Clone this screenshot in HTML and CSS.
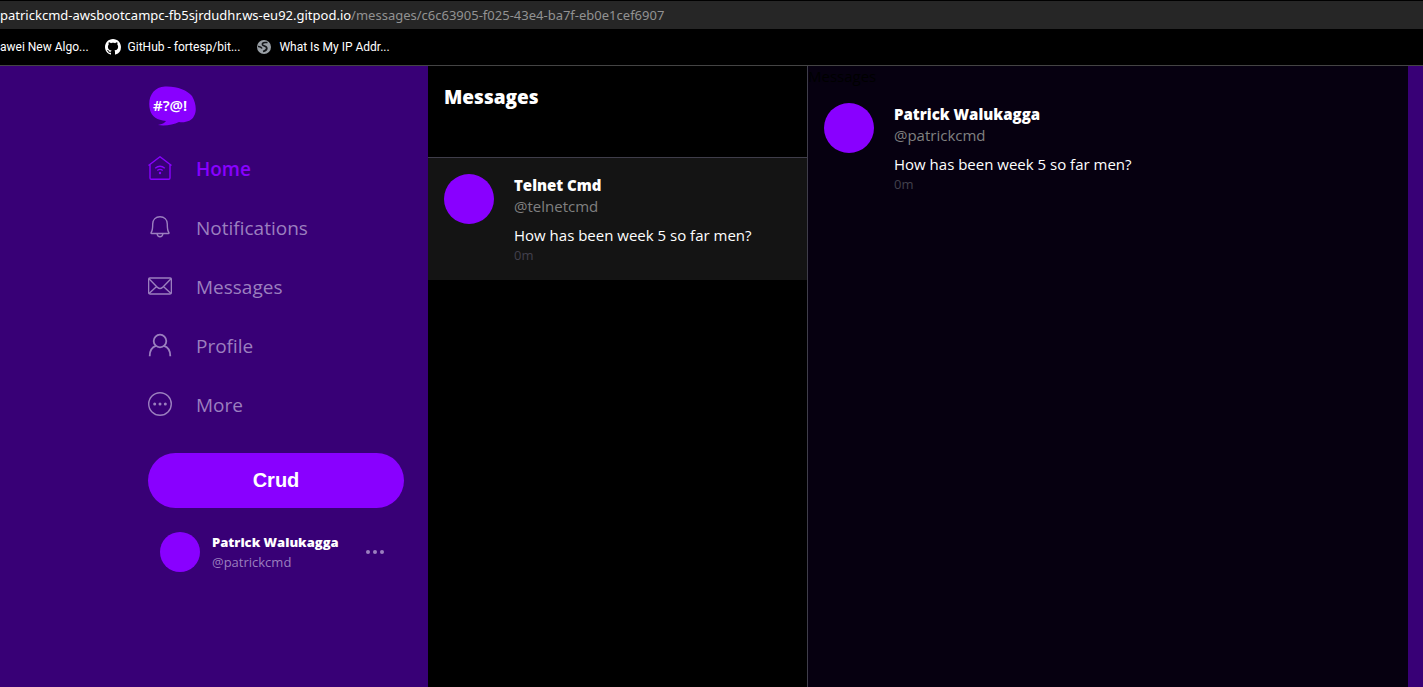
FILE: index.html
```html
<!DOCTYPE html>
<html lang="en">
<head>
<meta charset="utf-8">
<title>Messages</title>
<link rel="stylesheet" href="styles.css">
</head>
<body>
<header class="browser">
  <div class="address"><span class="host">patrickcmd-awsbootcampc-fb5sjrdudhr.ws-eu92.gitpod.io</span><span class="path">/messages/c6c63905-f025-43e4-ba7f-eb0e1cef6907</span></div>
  <nav class="bookmarks" aria-label="Bookmarks">
    <a class="bookmark" href="#">awei New Algo...</a>
    <a class="bookmark" href="#">
      <svg width="16" height="16" viewBox="0 0 16 16" fill="#fff" aria-hidden="true"><path d="M8 0C3.58 0 0 3.58 0 8c0 3.54 2.29 6.53 5.47 7.59.4.07.55-.17.55-.38 0-.19-.01-.82-.01-1.49-2.01.37-2.53-.49-2.69-.94-.09-.23-.48-.94-.82-1.13-.28-.15-.68-.52-.01-.53.63-.01 1.08.58 1.23.82.72 1.21 1.87.87 2.33.66.07-.52.28-.87.51-1.07-1.78-.2-3.64-.89-3.64-3.95 0-.87.31-1.59.82-2.15-.08-.2-.36-1.02.08-2.12 0 0 .67-.21 2.2.82.64-.18 1.32-.27 2-.27s1.36.09 2 .27c1.53-1.04 2.2-.82 2.2-.82.44 1.1.16 1.92.08 2.12.51.56.82 1.27.82 2.15 0 3.07-1.87 3.75-3.65 3.95.29.25.54.73.54 1.48 0 1.07-.01 1.93-.01 2.2 0 .21.15.46.55.38A8.01 8.01 0 0 0 16 8c0-4.42-3.58-8-8-8z"/></svg>
      GitHub - fortesp/bit...</a>
    <a class="bookmark" href="#">
      <svg width="16" height="16" viewBox="0 0 16 16" aria-hidden="true"><circle cx="8" cy="8" r="7" fill="#9aa0a6"/><path d="M11.500 3.500H9Q6 3.700 6.500 5.700C7 7.500 11 6.500 10.800 9.500Q10.500 11.500 7 12.500M2 7.500Q5 7.300 6 9.500" fill="none" stroke="#15171a" stroke-width="1.700"/></svg>
      What Is My IP Addr...</a>
  </nav>
</header>
<div class="app">
  <aside class="sidebar">
    <svg class="logo" width="48" height="40" viewBox="0 0 48 40" role="img" aria-label="Cruddur">
      <path d="M17 .5C29 0 39 4 44 10C48 17 49 25 46 30C44 35 37 37 31 36C25 39 17 40 10 39C14 38 17 37 18 35C9 34 4 31 2 24C-1 12 5 1 17 .5Z" fill="#8900ff"/>
      <text class="logo-text" x="5" y="25" fill="#fff">#?@!</text>
    </svg>
    <nav class="menu" aria-label="Main">
      <a class="menu-item active" href="#">
        <svg width="24" height="26" viewBox="0 0 24 26" aria-hidden="true"><path d="M.5 9.500L12 .8L23.500 9.500M2 8.500V22Q2 23.300 3.300 23.300H20.700Q22 23.300 22 22V8.500"/><path d="M7.200 12.200Q12 8.200 16.800 12.200M9.300 14.500Q12 12.300 14.700 14.500"/><circle class="dot" cx="12" cy="17" r="1.200"/></svg>
        Home</a>
      <a class="menu-item" href="#">
        <svg width="24" height="26" viewBox="0 0 24 26" aria-hidden="true"><path d="M3.600 18.500C3 18.500 2.800 18 3.200 17.400C4.800 15 4.700 13 4.700 9C4.700 4.500 7.800 1.700 12 1.700S19.300 4.500 19.300 9C19.300 13 19.200 15 20.800 17.400C21.200 18 21 18.500 20.400 18.500ZM9 18.700Q9.500 21.800 12 21.800T15 18.700"/></svg>
        Notifications</a>
      <a class="menu-item" href="#">
        <svg width="24" height="26" viewBox="0 0 24 26" aria-hidden="true"><rect x=".6" y="4" width="22.800" height="16" rx="1.500"/><path d="M1 4.700L9.500 13.400Q12 15.500 14.500 13.400L23 4.700M1 19.400L8.600 12.500M23 19.400L15.400 12.500"/></svg>
        Messages</a>
      <a class="menu-item" href="#">
        <svg class="bold" width="24" height="26" viewBox="0 0 24 26" aria-hidden="true"><circle cx="12" cy="8" r="6.300"/><path d="M1.700 23.200C1.700 17.500 4.500 14 8 12.900M22.300 23.200C22.300 17.500 19.500 14 16 12.900"/></svg>
        Profile</a>
      <a class="menu-item" href="#">
        <svg width="24" height="26" viewBox="0 0 24 26" aria-hidden="true"><circle cx="12" cy="12" r="11.300"/><g class="dot"><circle cx="6.700" cy="12" r="1.500"/><circle cx="12" cy="12" r="1.500"/><circle cx="17.300" cy="12" r="1.500"/></g></svg>
        More</a>
    </nav>
    <button class="crud" type="button">Crud</button>
    <div class="account">
      <div class="avatar avatar-small"></div>
      <div class="account-text">
        <div class="account-name">Patrick Walukagga</div>
        <div class="account-handle">@patrickcmd</div>
      </div>
      <button class="more" type="button" aria-label="Account options">
        <svg width="18" height="4" viewBox="0 0 18 4" fill="#9b7fbf" aria-hidden="true"><circle cx="2" cy="2" r="2"/><circle cx="9" cy="2" r="2"/><circle cx="16" cy="2" r="2"/></svg>
      </button>
    </div>
  </aside>
  <section class="groups">
    <header class="groups-header"><h1 class="title">Messages</h1></header>
    <article class="message selected">
      <div class="avatar"></div>
      <div>
        <div class="name">Telnet Cmd</div>
        <div class="handle">@telnetcmd</div>
        <p class="body">How has been week 5 so far men?</p>
        <time class="time">0m</time>
      </div>
    </article>
  </section>
  <main class="thread">
    <div class="thread-title">Messages</div>
    <article class="message">
      <div class="avatar"></div>
      <div>
        <div class="name">Patrick Walukagga</div>
        <div class="handle">@patrickcmd</div>
        <p class="body">How has been week 5 so far men?</p>
        <time class="time">0m</time>
      </div>
    </article>
  </main>
</div>
</body>
</html>
```
FILE: styles.css
```css
* { box-sizing: border-box; }
body {
  margin: 0;
  min-height: 100vh;
  display: flex;
  flex-direction: column;
  background: #380076;
  color: #fff;
  font-family: "Open Sans", "Noto Sans", sans-serif;
  font-size: 15px;
}
a { color: inherit; text-decoration: none; }
button { border: 0; cursor: pointer; }

.browser { background: #000; border-bottom: 1px solid #444; padding-top: 1px; }
.address {
  background: #262626;
  font-family: "Noto Sans", sans-serif;
  font-size: 13px;
  line-height: 28px;
  white-space: nowrap;
}
.path { color: #929292; }
.bookmarks {
  display: flex;
  gap: 16px;
  height: 36px;
  align-items: center;
  font-family: Roboto, sans-serif;
  font-size: 12px;
}
.bookmark { display: flex; align-items: center; gap: 7px; white-space: nowrap; }

.app { flex: 1; display: flex; padding: 0 15px 0 128px; }
.sidebar { width: 300px; flex: none; padding: 20px 24px 20px 20px; display: flex; flex-direction: column; }
.logo { display: block; }
.logo-text { font: 600 15px "Noto Sans", sans-serif; }
.menu { display: flex; flex-direction: column; padding-top: 13px; }
.menu-item { display: flex; align-items: center; gap: 24px; height: 59px; font-size: 19px; color: #9b7fbf; }
.menu-item svg { fill: none; stroke: currentColor; stroke-width: 1.4; }
.menu-item .bold { stroke-width: 1.8; }
.menu-item .dot { fill: currentColor; stroke: none; }
.menu-item.active { color: #8900ff; font-weight: 600; }
.crud {
  margin-top: 19px;
  height: 55px;
  border-radius: 28px;
  background: #8900ff;
  color: #fff;
  font: bold 20px "Liberation Sans", Arial, sans-serif;
}
.account {
  display: flex;
  align-items: center;
  gap: 12px;
  padding: 24px 20px 0 12px;
  font-size: 13px;
}
.account-text { flex: 1; white-space: nowrap; }
.account-name { font-weight: 800; line-height: 20px; }
.account-handle { line-height: 20px; color: #9b7fbf; }
.more { background: none; padding: 0; display: flex; }

.avatar { width: 50px; height: 50px; flex: none; border-radius: 50%; background: #8900ff; }
.avatar-small { width: 40px; height: 40px; }

.groups { width: 380px; flex: none; background: #000; border-right: 1px solid #3f3d4a; }
.groups-header { height: 92px; padding: 16px; border-bottom: 1px solid #3f3d4a; }
.title { margin: 0; font-size: 19px; font-weight: 800; line-height: 30px; }
.message { display: flex; gap: 20px; padding: 16px; }
.selected { background: #141414; }
.name { font-size: 15px; font-weight: 800; line-height: 22px; }
.handle { line-height: 21px; color: #808080; }
.body { margin: 8px 0 0; line-height: 21px; }
.time { display: block; font-size: 13px; line-height: 18px; color: #42404d; }

.thread { flex: 1; background: #060010; }
.thread-title { color: #000; line-height: 21px; }
```
